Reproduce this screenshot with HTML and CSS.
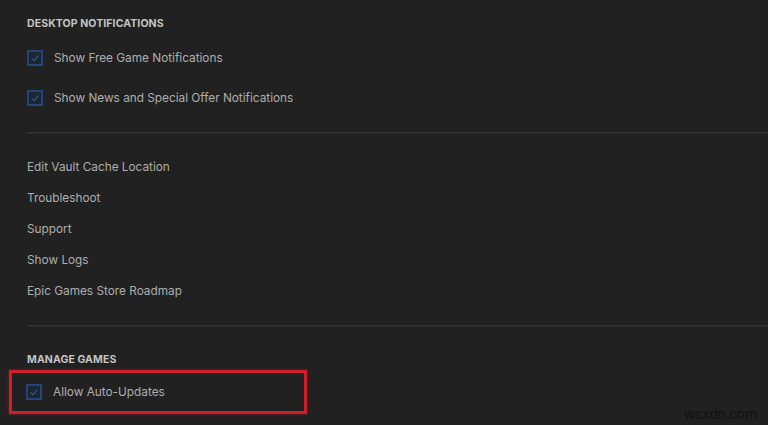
FILE: index.html
```html
<!DOCTYPE html>
<html>
<head>
<meta charset="utf-8">
<link rel="stylesheet" href="styles.css">
</head>
<body>
<div class="page">
  <div class="section">
    <div class="heading first">DESKTOP NOTIFICATIONS</div>
    <div class="check-row">
      <span class="box"><svg viewBox="0 0 16 16" width="16" height="16"><path d="M4.5 8.3 L7 10.8 L11.5 5.5" fill="none" stroke="#33547f" stroke-width="1.3"/></svg></span>
      <span class="label">Show Free Game Notifications</span>
    </div>
    <div class="check-row">
      <span class="box"><svg viewBox="0 0 16 16" width="16" height="16"><path d="M4.5 8.3 L7 10.8 L11.5 5.5" fill="none" stroke="#33547f" stroke-width="1.3"/></svg></span>
      <span class="label">Show News and Special Offer Notifications</span>
    </div>
  </div>
  <div class="divider d1"></div>
  <div class="section links">
    <div class="link">Edit Vault Cache Location</div>
    <div class="link">Troubleshoot</div>
    <div class="link">Support</div>
    <div class="link">Show Logs</div>
    <div class="link">Epic Games Store Roadmap</div>
  </div>
  <div class="divider d2"></div>
  <div class="section">
    <div class="heading second">MANAGE GAMES</div>
    <div class="check-row highlighted">
      <span class="box"><svg viewBox="0 0 16 16" width="16" height="16"><path d="M4.5 8.3 L7 10.8 L11.5 5.5" fill="none" stroke="#33547f" stroke-width="1.3"/></svg></span>
      <span class="label">Allow Auto-Updates</span>
    </div>
  </div>
  <div class="watermark">wsxdn.com</div>
</div>
</body>
</html>
```
FILE: styles.css
```css
html, body {
  margin: 0;
  padding: 0;
  background: #202020;
}
.page {
  position: relative;
  width: 768px;
  height: 425px;
  overflow: hidden;
  background: #212121;
  font-family: Inter, "Noto Sans", "Liberation Sans", sans-serif;
}
.section {
  padding-left: 27px;
}
.heading {
  font-size: 10.5px;
  font-weight: 700;
  line-height: 14px;
  height: 14px;
  color: #c4c4c4;
  letter-spacing: 0.1px;
}
.heading.first {
  padding-top: 17px;
  margin-bottom: 7px;
}
.heading.second {
  margin-top: 26px;
}
.check-row {
  display: flex;
  align-items: center;
  height: 40px;
}
.box {
  width: 16px;
  height: 16px;
  box-sizing: border-box;
  border: 2px solid #234676;
  background: #1c2534;
  display: flex;
  align-items: center;
  justify-content: center;
  flex: none;
}
.box svg {
  flex: none;
}
.label {
  margin-left: 11px;
  font-size: 11.8px;
  color: #aeaeae;
}
.divider {
  margin-left: 27px;
  height: 1px;
  background: #353535;
  border-bottom: 1px solid #2a2a2a;
}
.d1 {
  margin-top: 14px;
}
.links {
  padding-top: 17px;
}
.link {
  height: 31px;
  display: flex;
  align-items: center;
  font-size: 11.8px;
  color: #aeaeae;
}
.d2 {
  margin-top: 19px;
}
.check-row.highlighted {
  margin-top: 3px;
  margin-left: -18px;
  width: 298px;
  height: 44px;
  box-sizing: border-box;
  border: 3px solid #cf1f2b;
  box-shadow: 0 0 3px rgba(220, 30, 40, 0.5);
  padding-left: 14px;
}
.watermark {
  position: absolute;
  right: 11px;
  bottom: 3px;
  font-family: "Liberation Sans", Arial, sans-serif;
  font-size: 14.5px;
  color: #121212;
}
```
